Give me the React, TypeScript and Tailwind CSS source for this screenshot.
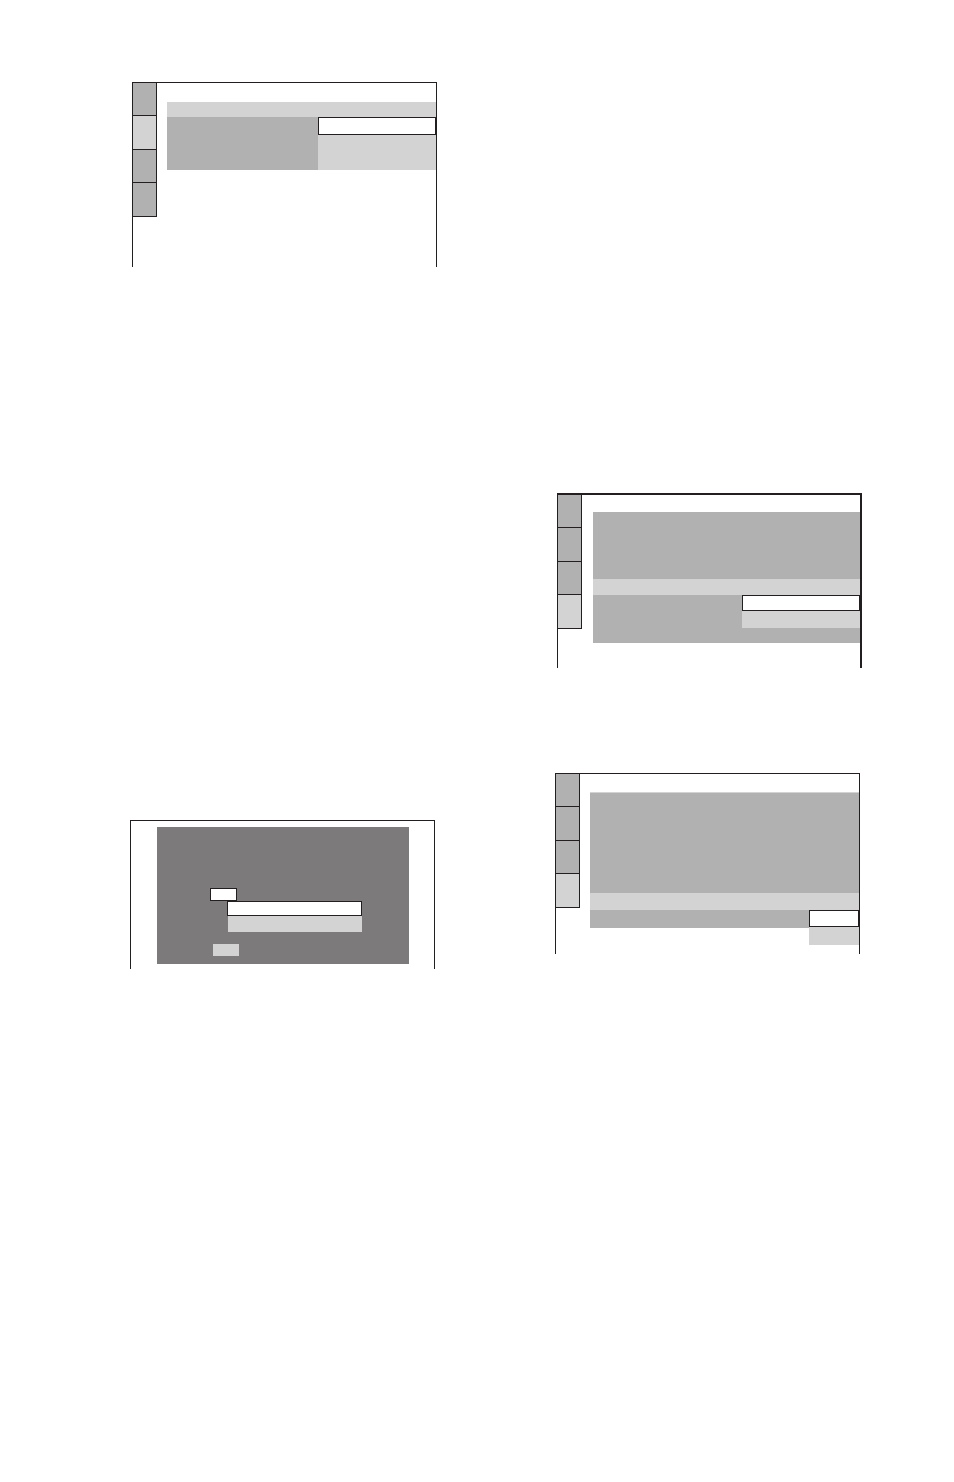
const line = "border-[#231f20]";

const tabHeights = ["h-[33px]", "h-[34px]", "h-[33px]", "h-[33px]"];

function Tabs({ active }: { active: number }) {
  return (
    <div className={`self-start flex flex-col w-[24px] border-r border-b ${line}`}>
      {tabHeights.map((h, i) => (
        <div
          key={i}
          className={`${h} ${i < 3 ? `border-b ${line}` : ""} ${
            i === active ? "bg-[#d3d3d3]" : "bg-[#b1b1b1]"
          }`}
        />
      ))}
    </div>
  );
}

function ScreenOne() {
  return (
    <div className={`flex w-[305px] h-[185px] border-t border-x ${line}`}>
      <Tabs active={1} />
      <div className="flex-1 flex flex-col pl-[10px] pt-[19px]">
        <div className="h-[15px] bg-[#d3d3d3]" />
        <div className="flex">
          <div className="flex-1 h-[53px] bg-[#b1b1b1]" />
          <div className="w-[118px] flex flex-col">
            <div className={`h-[18px] bg-white border ${line}`} />
            <div className="h-[35px] bg-[#d3d3d3]" />
          </div>
        </div>
      </div>
    </div>
  );
}

function ScreenTwo() {
  return (
    <div className={`flex w-[305px] h-[175px] border-t-2 border-l border-r-2 ${line}`}>
      <Tabs active={3} />
      <div className="flex-1 flex flex-col pl-[11px] pt-[17px]">
        <div className="h-[67px] bg-[#b1b1b1]" />
        <div className="h-[16px] bg-[#d3d3d3]" />
        <div className="flex h-[48px] bg-[#b1b1b1]">
          <div className="flex-1" />
          <div className="w-[118px] flex flex-col">
            <div className={`h-[16px] bg-white border ${line}`} />
            <div className="h-[17px] bg-[#d3d3d3]" />
          </div>
        </div>
      </div>
    </div>
  );
}

function ScreenThree() {
  return (
    <div className={`w-[305px] h-[149px] border-t border-x ${line} pl-[26px] pt-[6px]`}>
      <div className="w-[252px] h-[137px] bg-[#7c7a7b] flex flex-col pt-[61px]">
        <div className={`ml-[53px] w-[27px] h-[13px] bg-white border ${line}`} />
        <div className={`ml-[70px] w-[135px] h-[15px] bg-white border ${line}`} />
        <div className="ml-[71px] w-[134px] h-[16px] bg-[#d3d3d3]" />
        <div className="ml-[56px] mt-[12px] w-[26px] h-[12px] bg-[#d3d3d3]" />
      </div>
    </div>
  );
}

function ScreenFour() {
  return (
    <div className={`flex w-[305px] h-[181px] border-t border-x ${line}`}>
      <Tabs active={3} />
      <div className="flex-1 flex flex-col pl-[10px] pt-[18px]">
        <div className="h-[101px] bg-[#b1b1b1] border-t border-[#d3d3d3]" />
        <div className="h-[17px] bg-[#d3d3d3]" />
        <div className="flex items-start">
          <div className="flex-1 h-[18px] bg-[#b1b1b1]" />
          <div className="w-[50px] flex flex-col">
            <div className={`h-[17px] bg-white border ${line}`} />
            <div className="h-[18px] bg-[#d3d3d3]" />
          </div>
        </div>
      </div>
    </div>
  );
}

export default function App() {
  return (
    <div className="w-[954px] min-h-[1482px] bg-white flex">
      <div className="flex flex-col w-[425px] pl-[130px]">
        <div className="mt-[82px] ml-[2px]">
          <ScreenOne />
        </div>
        <div className="mt-[553px]">
          <ScreenThree />
        </div>
      </div>
      <div className="flex flex-col pl-[130px]">
        <div className="mt-[493px] ml-[2px]">
          <ScreenTwo />
        </div>
        <div className="mt-[105px]">
          <ScreenFour />
        </div>
      </div>
    </div>
  );
}
